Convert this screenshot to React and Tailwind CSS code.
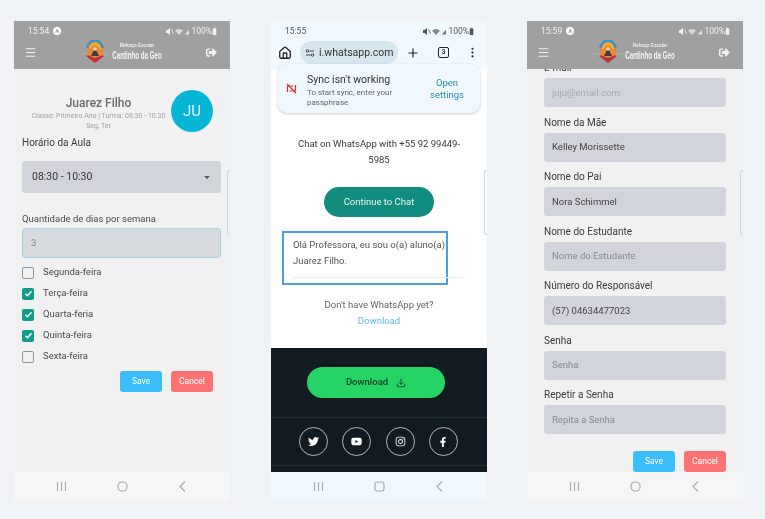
import React from 'react';
import { Menu, Home, Plus, MoreVertical, Download } from 'lucide-react';
import { FaTwitter, FaYoutube, FaInstagram, FaFacebookF, FaSignOutAlt } from 'react-icons/fa';

const StatusBar = ({ time, color, badge }) => (
  <div className="flex h-[20px] items-center justify-between pl-[14px] pr-[13px] text-[8.5px]" style={{ color }}>
    <div className="flex items-center gap-[4px]">
      <span>{time}</span>
      {badge && (
        <span className="flex h-[8px] w-[8px] items-center justify-center rounded-full bg-white text-[6px] font-bold leading-none text-[#a0a0a0]">A</span>
      )}
    </div>
    <div className="flex items-center">
      <svg width="26" height="9" viewBox="0 0 26 9" fill={color} className="shrink-0">
        <path d="M1 3h1.5L5 1v7L2.5 6H1z" />
        <path d="M6.5 2l2 5" stroke={color} strokeWidth="0.7" />
        <path d="M10 3.5a6 6 0 0 1 8 0l-4 4.5z" opacity="0.7" />
        <path d="M20 7.5l4-5v5z" opacity="0.8" />
      </svg>
      <span>100%</span>
      <svg width="5" height="9" viewBox="0 0 5 9" fill={color} className="shrink-0">
        <rect x="0.7" y="1.5" width="3.6" height="6.5" rx="0.6" />
        <rect x="1.7" y="0.7" width="1.6" height="1" />
      </svg>
    </div>
  </div>
);

const NavBar = ({ bg, round }) => (
  <div className={`flex h-[29px] shrink-0 items-center justify-center gap-[49.5px] ${bg}`}>
    <svg width="11" height="11" viewBox="0 0 11 11" stroke="#a9acb0" strokeWidth="1.2" fill="none">
      <path d="M1.5 1v9M5.5 1v9M9.5 1v9" />
    </svg>
    <svg width="11" height="11" viewBox="0 0 11 11" stroke="#a9acb0" strokeWidth="1.2" fill="none">
      <rect x="1" y="1" width="9" height="9" rx={round ? 4 : 2.5} />
    </svg>
    <svg width="11" height="11" viewBox="0 0 11 11" stroke="#a9acb0" strokeWidth="1.2" fill="none">
      <path d="M8 0.5L3 5.5l5 5" />
    </svg>
  </div>
);

const Logo = () => (
  <svg width="26" height="24" viewBox="0 0 26 24" className="shrink-0">
    <path d="M0 14h26" stroke="#c9b48a" strokeWidth="0.7" />
    <path d="M4 16l9 7 9-7-9-4z" fill="#c0313c" />
    <path d="M5 10a8 8 0 0 1 16 0v5l-8 3-8-3z" fill="#e98a35" />
    <path d="M5.500 8a7.500 7.500 0 0 1 15 0" fill="none" stroke="#2f93c9" strokeWidth="2.2" />
    <path d="M8 9a5 5 0 0 1 10 0" fill="none" stroke="#e7c64a" strokeWidth="1.3" />
    <path d="M9 16l3-6h2l3 6z" fill="#3b3b50" />
    <circle cx="13" cy="9" r="1.8" fill="#f2d5b5" />
  </svg>
);

const AppHeader = ({ time }) => (
  <div className="h-[48px] shrink-0 bg-[#a0a0a0]">
    <StatusBar time={time} color="#f2f2f2" badge />
    <div className="flex h-[22px] items-center pl-[10px] pr-[13px]">
      <Menu size={13} color="#f4f4f4" />
      <div className="ml-[45px] flex items-center gap-[4px]">
        <Logo />
        <div className="-mt-[1px] flex w-[50px] flex-col items-center font-['Liberation_Sans',sans-serif] font-bold leading-none text-[#f4f4f4]">
          <span className="scale-x-[0.75] whitespace-nowrap text-[6px]">Reforço Escolar</span>
          <span className="mt-[2px] scale-x-[0.56] whitespace-nowrap text-[11px]">Cantinho da Geo</span>
        </div>
      </div>
      <FaSignOutAlt size={11} color="#f4f4f4" className="ml-auto" />
    </div>
  </div>
);

const Handle = () => (
  <div className="absolute right-0 top-[149px] h-[65px] w-[3px] rounded-l-[3px] border-y border-l border-[#d2d4d6]" />
);

const Check = ({ label, checked }) => (
  <div className="flex h-[21px] items-center gap-[9px] text-[9.5px] text-[#4a4a4a]">
    {checked ? (
      <span className="flex h-[12px] w-[12px] items-center justify-center rounded-[2px] bg-[#0f9d8a]">
        <svg width="9" height="9" viewBox="0 0 9 9" fill="none" stroke="#fff" strokeWidth="1.5">
          <path d="M1.5 4.7l2 2 4-4.5" />
        </svg>
      </span>
    ) : (
      <span className="h-[12px] w-[12px] rounded-[2px] border-[1.5px] border-[#8a96a3] bg-[#f1f1f1]" />
    )}
    <span>{label}</span>
  </div>
);

const Buttons = ({ mt, pr }) => (
  <div className={`flex justify-end gap-[9px] ${mt} ${pr}`}>
    <div className="flex h-[21px] w-[42px] items-center justify-center rounded-[3px] bg-[#3bbdfc] text-[8.5px] text-white">Save</div>
    <div className="flex h-[21px] w-[42px] items-center justify-center rounded-[3px] bg-[#fb7273] text-[8.5px] text-white">Cancel</div>
  </div>
);

const Field = ({ label, value, placeholder, faint }) => (
  <div className="h-[54.5px]">
    <div className="h-[26px] pt-[9px] text-[10px] leading-[14px] text-[#3a3a3a]">{label}</div>
    <div className={`flex h-[29px] items-center rounded-[3px] bg-[#d1d4da] pl-[8px] pt-[1px] text-[9.5px] ${value ? 'text-[#444]' : faint ? 'text-[#a6a9af]' : 'text-[#878b92]'}`}>
      {value || placeholder}
    </div>
  </div>
);

const PhoneOne = () => (
  <div className="relative flex h-[480px] w-[216px] flex-col overflow-hidden bg-[#f1f1f1]">
    <AppHeader time="15:54" />
    <div className="min-h-0 flex-1 pl-[8px] pr-[9px]">
      <div className="flex h-[63px] items-end pr-[8px]">
        <div className="flex w-[153px] shrink-0 flex-col items-center">
          <span className="text-[12px] font-medium leading-[15px] text-[#6b6b6b]">Juarez Filho</span>
          <span className="whitespace-nowrap text-[7px] leading-[10px] text-[#a0a0a0]">Classe: Primeiro Ano | Turma: 08:30 - 10:30</span>
          <span className="mb-[1px] text-[7px] leading-[10px] text-[#a0a0a0]">Seg, Ter</span>
        </div>
        <div className="-ml-[4px] flex h-[42px] w-[42px] shrink-0 items-center justify-center rounded-full bg-[#06b6d4] text-[15px] text-[#e4f5f9]">JU</div>
      </div>
      <div className="mt-[4px] h-[14px] text-[10px] leading-[14px] text-[#3a3a3a]">Horário da Aula</div>
      <div className="mt-[11px] flex h-[32px] items-center justify-between rounded-[3px] bg-[#d1d4da] pl-[10px] pr-[11px] text-[10.5px] text-[#333]">
        <span>08:30 - 10:30</span>
        <span className="h-0 w-0 border-x-[3px] border-t-[3px] border-x-transparent border-t-[#555]" />
      </div>
      <div className="mt-[19px] h-[14px] text-[9.5px] leading-[14px] text-[#4a4a4a]">Quantidade de dias por semana</div>
      <div className="mt-[2px] flex h-[30px] items-center rounded-[3px] border border-[#a9d6e5] bg-[#d6d9dd] pl-[8px] text-[9.5px] text-[#888]">3</div>
      <div className="mt-[4px]">
        <Check label="Segunda-feira" />
        <Check label="Terça-feira" checked />
        <Check label="Quarta-feria" checked />
        <Check label="Quinta-feira" checked />
        <Check label="Sexta-feira" />
      </div>
      <Buttons mt="mt-[4px]" pr="pr-[8px]" />
    </div>
    <NavBar bg="bg-[#f6f6f6]" round />
    <Handle />
  </div>
);

const PhoneTwo = () => (
  <div className="relative flex h-[480px] w-[216px] flex-col overflow-hidden bg-white">
    <div className="h-[48px] shrink-0 bg-[#f2f9fe]">
      <StatusBar time="15:55" color="#555" />
      <div className="flex h-[23px] items-center pl-[7px] pr-[8px]">
        <Home size={14} color="#222" strokeWidth={2.2} />
        <div className="ml-[8px] flex h-[23px] w-[98px] items-center gap-[4px] rounded-full bg-[#d5e6ee] pl-[5px] text-[10.5px] text-[#333]">
          <svg width="10" height="10" viewBox="0 0 10 10" fill="none" stroke="#333" strokeWidth="0.9" className="shrink-0">
            <circle cx="2.5" cy="3" r="1.3" />
            <path d="M4.500 3H9M1 7h4.500" />
            <circle cx="7.500" cy="7" r="1.3" />
          </svg>
          <span>i.whatsapp.com</span>
        </div>
        <Plus size={14} color="#222" className="ml-[8px]" />
        <div className="ml-[18px] flex h-[11px] w-[11px] items-center justify-center rounded-[2px] border border-[#222] text-[6.5px] font-medium text-[#222]">3</div>
        <MoreVertical size={13} color="#222" className="ml-auto" />
      </div>
    </div>
    <div className="relative z-10 mx-[7px] -mt-[5px] flex h-[49px] shrink-0 items-center rounded-[9px] bg-[#f0f7fd] pl-[8px] pr-[15px] shadow-[0_1px_3px_rgba(0,0,0,0.2)]">
      <svg width="11" height="11" viewBox="0 0 11 11" fill="none" stroke="#c6342f" strokeWidth="1.2" className="shrink-0">
        <path d="M1.500 9V3.500L3.500 2M9.500 2v5.500L7.500 9M1 1l9 9M4.500 3l3 0M3.500 8l3 0" />
      </svg>
      <div className="ml-[10px] mt-[4px] w-[118px]">
        <div className="text-[10.5px] leading-[14px] text-[#333]">Sync isn't working</div>
        <div className="mt-[1px] text-[8px] leading-[10px] text-[#666]">To start sync, enter your<br />passphrase</div>
      </div>
      <div className="ml-auto w-[36px] text-center text-[9.5px] leading-[12px] text-[#2a8cb0]">Open settings</div>
    </div>
    <div className="flex min-h-0 flex-1 flex-col bg-white">
      <div className="mt-[23px] px-[22px] text-center text-[9.5px] leading-[16px] text-[#3a3a3a]">Chat on WhatsApp with +55 92 99449-5985</div>
      <div className="mx-auto mt-[19px] flex h-[30px] w-[110px] shrink-0 items-center justify-center rounded-full bg-[#128c7e] text-[9.5px] text-[#e8f5f3]">Continue to Chat</div>
      <div className="relative ml-[11px] mt-[14px] h-[54px] w-[166px] shrink-0 border-2 border-[#4d9de6] pl-[9px] pt-[4px] text-[9.5px] leading-[16px] text-[#555]">
        Olá Professora, eu sou o(a) aluno(a) Juarez Filho.
        <div className="absolute left-[8px] top-[44px] h-px w-[173px] bg-[#eeeeee]" />
      </div>
      <div className="mt-[12px] text-center text-[9.5px] leading-[16px] text-[#666]">
        Don't have WhatsApp yet?
        <div className="text-[#5bbcec]">Download</div>
      </div>
      <div className="mt-[19px] min-h-0 flex-1 bg-[#111b21]">
        <div className="ml-[36px] mt-[19px] flex h-[31px] w-[138px] items-center justify-center gap-[8px] rounded-full bg-[#25d366] text-[9.5px] font-medium text-[#0f3d2a]">
          Download
          <Download size={10} color="#0f3d2a" />
        </div>
        <div className="mt-[19px] flex h-[49px] items-center gap-[14.300px] border-y border-[#21302f] pl-[28px]">
          <div className="flex h-[29px] w-[29px] items-center justify-center rounded-full border border-[#b5b8ba]"><FaTwitter size={11} color="#fff" /></div>
          <div className="flex h-[29px] w-[29px] items-center justify-center rounded-full border border-[#b5b8ba]"><FaYoutube size={11} color="#fff" /></div>
          <div className="flex h-[29px] w-[29px] items-center justify-center rounded-full border border-[#b5b8ba]"><FaInstagram size={11} color="#fff" /></div>
          <div className="flex h-[29px] w-[29px] items-center justify-center rounded-full border border-[#b5b8ba]"><FaFacebookF size={10} color="#fff" /></div>
        </div>
      </div>
    </div>
    <NavBar bg="bg-[#f2f9fe]" />
    <Handle />
  </div>
);

const PhoneThree = () => (
  <div className="relative flex h-[480px] w-[216px] flex-col overflow-hidden bg-[#f1f1f1]">
    <AppHeader time="15:59" />
    <div className="min-h-0 flex-1 overflow-hidden px-[17px]">
      <div className="-mt-[17px]">
        <Field label="E-mail" placeholder="juju@email.com" faint />
        <Field label="Nome da Mãe" value="Kelley Morissette" />
        <Field label="Nome do Pai" value="Nora Schimmel" />
        <Field label="Nome do Estudante" placeholder="Nome do Estudante" />
        <Field label="Número do Responsável" value="(57) 04634477023" />
        <Field label="Senha" placeholder="Senha" />
        <Field label="Repetir a Senha" placeholder="Repita a Senha" />
      </div>
      <Buttons mt="mt-[17px]" pr="pr-0" />
    </div>
    <NavBar bg="bg-[#f6f6f6]" round />
    <Handle />
  </div>
);

export default function App() {
  return (
    <div className="flex h-[519px] w-[765px] gap-[41px] overflow-hidden bg-[#eff3f6] pl-[14px] pt-[21px] font-['Roboto',sans-serif] blur-[0.35px]">
      <PhoneOne />
      <PhoneTwo />
      <div className="-ml-[1px]"><PhoneThree /></div>
    </div>
  );
}
